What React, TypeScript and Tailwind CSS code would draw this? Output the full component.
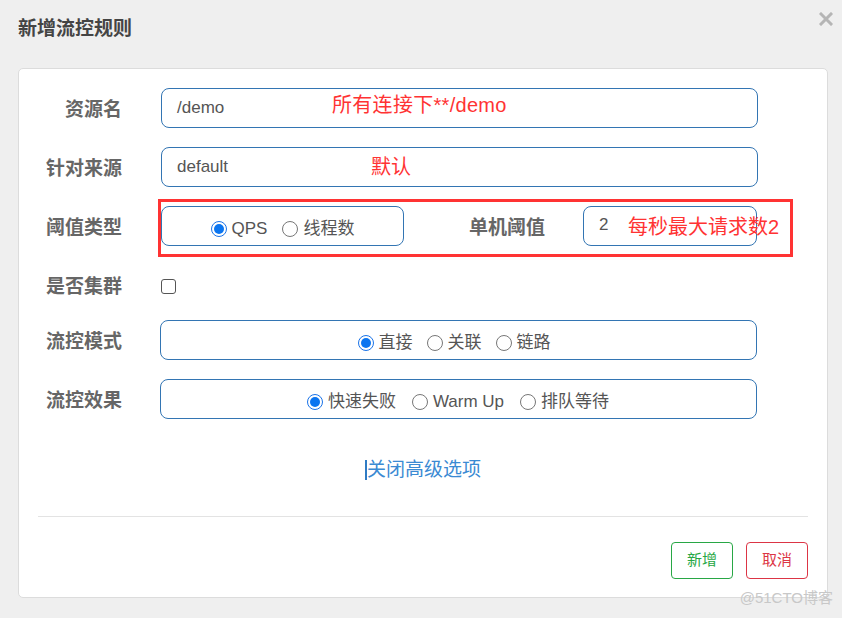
import React from 'react';

const font = { fontFamily: '"Liberation Sans", "Noto Sans CJK SC", sans-serif' };

const Radio: React.FC<{ checked?: boolean; label: string }> = ({ checked, label }) => (
  <label className="flex items-center gap-[5px] text-[17px] text-[#555]">
    {checked ? (
      <span className="w-[16px] h-[16px] rounded-full border border-[#1a73e8] bg-white flex items-center justify-center">
        <span className="w-[10px] h-[10px] rounded-full bg-[#0b75f0]" />
      </span>
    ) : (
      <span className="w-[16px] h-[16px] rounded-full border border-[#777] bg-white" />
    )}
    <span>{label}</span>
  </label>
);

const Label: React.FC<{ children: React.ReactNode }> = ({ children }) => (
  <div className="w-[84px] pt-[5px] text-right text-[19px] font-bold text-[#666] shrink-0">{children}</div>
);

const boxCls = 'h-[40px] rounded-[8px] border border-[#3375b3] bg-white';

export default function App() {
  return (
    <div className="w-[842px] h-[618px] bg-[#efefef] relative overflow-hidden" style={font}>
      <div className="flex items-center justify-between pl-[18px] pr-[9px] pt-[17px] h-[42px]">
        <h2 className="text-[19px] font-bold text-[#444]">新增流控规则</h2>
        <svg width="14" height="14" viewBox="0 0 14 14" className="-mt-[21px]">
          <path d="M2 2 L12 12 M12 2 L2 12" stroke="#b5b5b5" strokeWidth="3" strokeLinecap="square" />
        </svg>
      </div>

      <div className="mx-[18px] mt-[26px] h-[530px] w-[810px] bg-white border border-[#dcdcdc] rounded-[5px] px-[19px] pt-[19px] flex flex-col">
        {/* 资源名 */}
        <div className="flex items-center">
          <Label>资源名</Label>
          <div className={`${boxCls} relative ml-[39px] w-[597px] flex items-center pl-[15px] text-[17px] text-[#555]`}>
            /demo
            <span className="absolute left-[170px] top-[1px] text-[20px] tracking-[0.3px] text-[#f33]">所有连接下**/demo</span>
          </div>
        </div>

        {/* 针对来源 */}
        <div className="flex items-center mt-[19px]">
          <Label>针对来源</Label>
          <div className={`${boxCls} relative ml-[39px] w-[597px] flex items-center pl-[15px] text-[17px] text-[#555]`}>
            default
            <span className="absolute left-[209px] top-[4px] text-[20px] text-[#f33]">默认</span>
          </div>
        </div>

        {/* 阈值类型 */}
        <div className="flex items-center mt-[19px] relative">
          <Label>阈值类型</Label>
          <div className={`${boxCls} ml-[39px] w-[243px] flex items-center justify-center gap-[15px] pt-[5px]`}>
            <Radio checked label="QPS" />
            <Radio label="线程数" />
          </div>
          <div className="ml-[65px] pt-[5px] text-[19px] font-bold text-[#666]">单机阈值</div>
          <div className={`${boxCls} ml-[38px] w-[174px] flex items-center pl-[15px] pb-[3px] text-[17px] text-[#555]`}>2</div>
          <span className="absolute left-[590px] top-[6px] text-[20px] text-[#f33] whitespace-nowrap">每秒最大请求数2</span>
          <div className="absolute left-[120px] -top-[7px] w-[635px] h-[58px] border-[3px] border-[#f33]" />
        </div>

        {/* 是否集群 */}
        <div className="flex items-center mt-[19px] h-[40px]">
          <Label>是否集群</Label>
          <span className="ml-[39px] w-[15px] h-[15px] rounded-[3px] border border-[#555] bg-white mt-[3px]" />
        </div>

        {/* 流控模式 */}
        <div className="flex items-center mt-[15px]">
          <Label>流控模式</Label>
          <div className={`${boxCls} ml-[38px] w-[597px] flex items-center justify-center gap-[14px] pr-[9px] pt-[5px]`}>
            <Radio checked label="直接" />
            <Radio label="关联" />
            <Radio label="链路" />
          </div>
        </div>

        {/* 流控效果 */}
        <div className="flex items-center mt-[19px]">
          <Label>流控效果</Label>
          <div className={`${boxCls} ml-[38px] w-[597px] flex items-center justify-center gap-[16px] pr-[1px] pt-[5px]`}>
            <Radio checked label="快速失败" />
            <Radio label="Warm Up" />
            <Radio label="排队等待" />
          </div>
        </div>

        <div className="flex justify-center items-center mt-[39px]">
          <span className="w-[2px] h-[20px] bg-[#2f7bc4]" />
          <span className="text-[19px] text-[#3b8ad3] leading-[24px]">关闭高级选项</span>
        </div>

        <div className="mt-[34px] h-px bg-[#e3e3e3]" />

        <div className="flex justify-end gap-[13px] mt-[25px]">
          <button className="w-[62px] h-[37px] rounded-[4px] border border-[#28a745] text-[#28a745] text-[15px] bg-white">
            新增
          </button>
          <button className="w-[62px] h-[37px] rounded-[4px] border border-[#dc3545] text-[#dc3545] text-[15px] bg-white">
            取消
          </button>
        </div>
      </div>

      <span className="absolute right-[9px] bottom-[9px] text-[15px] text-[#c8c8c8]">@51CTO博客</span>
    </div>
  );
}
